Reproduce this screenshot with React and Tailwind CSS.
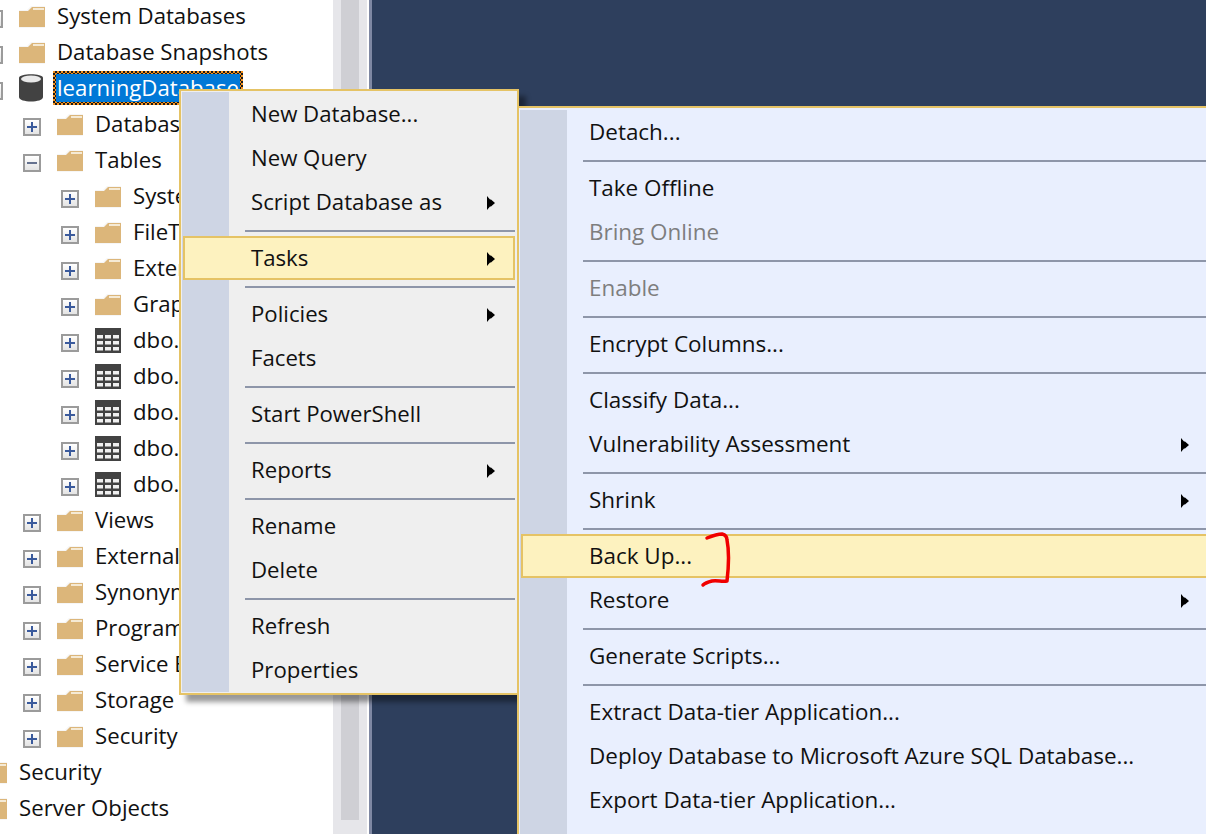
const FONT = "font-['Open_Sans',sans-serif]";

const treeRows = [
  { level: 0, icon: 'folder', label: 'System Databases', toggle: 'cut' },
  { level: 0, icon: 'folder', label: 'Database Snapshots', toggle: 'cut' },
  { level: 0, icon: 'db', label: 'learningDatabase', toggle: 'cut', selected: true },
  { level: 1, icon: 'folder', label: 'Database Diagrams', toggle: 'plus' },
  { level: 1, icon: 'folder', label: 'Tables', toggle: 'minus' },
  { level: 2, icon: 'folder', label: 'System Tables', toggle: 'plus' },
  { level: 2, icon: 'folder', label: 'FileTables', toggle: 'plus' },
  { level: 2, icon: 'folder', label: 'External Tables', toggle: 'plus' },
  { level: 2, icon: 'folder', label: 'Graph Tables', toggle: 'plus' },
  { level: 2, icon: 'table', label: 'dbo.Courses', toggle: 'plus' },
  { level: 2, icon: 'table', label: 'dbo.Lessons', toggle: 'plus' },
  { level: 2, icon: 'table', label: 'dbo.Marks', toggle: 'plus' },
  { level: 2, icon: 'table', label: 'dbo.Students', toggle: 'plus' },
  { level: 2, icon: 'table', label: 'dbo.Teachers', toggle: 'plus' },
  { level: 1, icon: 'folder', label: 'Views', toggle: 'plus' },
  { level: 1, icon: 'folder', label: 'External Resources', toggle: 'plus' },
  { level: 1, icon: 'folder', label: 'Synonyms', toggle: 'plus' },
  { level: 1, icon: 'folder', label: 'Programmability', toggle: 'plus' },
  { level: 1, icon: 'folder', label: 'Service Broker', toggle: 'plus' },
  { level: 1, icon: 'folder', label: 'Storage', toggle: 'plus' },
  { level: 1, icon: 'folder', label: 'Security', toggle: 'plus' },
  { level: -1, icon: 'folder', label: 'Security', toggle: 'plus' },
  { level: -1, icon: 'folder', label: 'Server Objects', toggle: 'plus' },
];

const indent = {
  '-1': '-ml-[53px]',
  0: '-ml-[15px]',
  1: 'ml-[23px]',
  2: 'ml-[61px]',
};

const contextMenu = [
  { label: 'New Database...' },
  { label: 'New Query' },
  { label: 'Script Database as', arrow: true },
  { sep: true },
  { label: 'Tasks', arrow: true, active: true },
  { sep: true },
  { label: 'Policies', arrow: true },
  { label: 'Facets' },
  { sep: true },
  { label: 'Start PowerShell' },
  { sep: true },
  { label: 'Reports', arrow: true },
  { sep: true },
  { label: 'Rename' },
  { label: 'Delete' },
  { sep: true },
  { label: 'Refresh' },
  { label: 'Properties' },
];

const tasksMenu = [
  { label: 'Detach...' },
  { sep: true },
  { label: 'Take Offline' },
  { label: 'Bring Online', disabled: true },
  { sep: true },
  { label: 'Enable', disabled: true },
  { sep: true },
  { label: 'Encrypt Columns...' },
  { sep: true },
  { label: 'Classify Data...' },
  { label: 'Vulnerability Assessment', arrow: true },
  { sep: true },
  { label: 'Shrink', arrow: true },
  { sep: true },
  { label: 'Back Up...', active: true },
  { label: 'Restore', arrow: true },
  { sep: true },
  { label: 'Generate Scripts...' },
  { sep: true },
  { label: 'Extract Data-tier Application...' },
  { label: 'Deploy Database to Microsoft Azure SQL Database...' },
  { label: 'Export Data-tier Application...' },
];

const FolderIcon = () => (
  <svg width="26" height="24" viewBox="0 0 26 24" className="shrink-0">
    <path d="M0 6H8L12 2H26V24H0Z" fill="#f6f6f6" />
    <path d="M0 7H9L13 3H26V23H0Z" fill="#dcb67a" />
    <rect x="14" y="4" width="11" height="2" fill="#f5ead5" />
  </svg>
);

const DbIcon = () => (
  <svg width="26" height="30" viewBox="0 0 26 30" className="shrink-0">
    <path d="M0 5C0 0 24 0 24 5V24C24 30 0 30 0 24Z" fill="#424242" />
    <ellipse cx="12" cy="6" rx="10" ry="3.5" fill="#e9e9e9" />
  </svg>
);

const TableIcon = () => (
  <svg width="26" height="25" viewBox="0 0 26 25" className="shrink-0">
    <rect width="26" height="25" fill="#424242" />
    {[7, 13, 19].map((y) =>
      [2, 10, 18].map((x) => (
        <rect key={`${x}-${y}`} x={x} y={y} width="6" height="3.5" fill="#f0f0f0" />
      ))
    )}
  </svg>
);

const Toggle = ({ open }) => (
  <span className="flex h-[18px] w-[18px] shrink-0 translate-y-[3px] items-center justify-center border-2 border-[#9b9b9b] bg-gradient-to-b from-white to-[#e4e4e4]">
    <svg width="12" height="12" viewBox="0 0 12 12">
      <rect x="1" y="5" width="10" height="2" fill={open ? '#65728f' : '#3a5a9c'} />
      {!open && <rect x="5" y="1" width="2" height="10" fill="#3a5a9c" />}
    </svg>
  </span>
);

const TreeRow = ({ row }) => (
  <div className={`flex h-9 items-center whitespace-nowrap ${indent[row.level]}`}>
    <Toggle open={row.toggle === 'minus'} />
    <span className="ml-4 flex w-[26px] shrink-0 items-center justify-center">
      {row.icon === 'folder' && <FolderIcon />}
      {row.icon === 'db' && <DbIcon />}
      {row.icon === 'table' && <TableIcon />}
    </span>
    {row.selected ? (
      <span className="ml-2 flex h-[34px] w-[190px] bg-[repeating-conic-gradient(#1a1a1a_0%_25%,#f7931e_0%_50%)] bg-[length:4px_4px] p-[3px]">
        <span className="flex flex-1 items-center overflow-hidden bg-[#0078d7] pl-px text-white">{row.label}</span>
      </span>
    ) : (
      <span className="ml-3 text-[#111]">{row.label}</span>
    )}
  </div>
);

const MenuList = ({ items }) => (
  <>
    {items.map((item, i) =>
      item.sep ? (
        <div key={i} className="h-3 pl-[63px] pr-px pt-1.5">
          <div className="h-0.5 w-full bg-[#8e96a9]" />
        </div>
      ) : (
        <div
          key={i}
          className={`mx-px flex h-11 items-center whitespace-nowrap border-2 pl-[66px] pr-[18px] ${
            item.active ? 'border-[#e5c365] bg-[#fdf2bf]' : 'border-transparent'
          } ${item.disabled ? 'text-[#7e7e7e]' : 'text-[#111]'}`}
        >
          <span>{item.label}</span>
          {item.arrow && (
            <svg width="8" height="14" viewBox="0 0 8 14" className="ml-auto translate-y-px">
              <path d="M0 0L3 3.5H4L8 7L4 10.5H3L0 14Z" fill="#000" />
            </svg>
          )}
        </div>
      )
    )}
  </>
);

export default function App() {
  return (
    <div className={`relative flex h-[834px] w-[1206px] overflow-hidden bg-white text-[22.2px] ${FONT}`}>
      {/* Object explorer */}
      <div className="-mt-0.5 w-[333px] shrink-0">
        {treeRows.map((row, i) => (
          <TreeRow key={i} row={row} />
        ))}
      </div>

      {/* Scrollbar */}
      <div className="w-[34px] shrink-0 bg-[#e6e6ea] px-2">
        <div className="h-[820px] w-[18px] bg-[#cfcfd4]" />
      </div>
      <div className="w-0.5 shrink-0 bg-white" />
      <div className="w-[3px] shrink-0 bg-[#7f88a3]" />
      <div className="flex-1 bg-[#2e3f5d]" />

      {/* Context menu */}
      <div className="absolute left-[179px] top-[89px] h-[606px] w-[340px] border-2 border-[#e5c365] bg-[#efefef] p-px shadow-[7px_7px_5px_rgba(0,0,0,0.4)]">
        <div className="h-full bg-[linear-gradient(to_right,#ced5e4_47px,#efefef_47px)]">
          <MenuList items={contextMenu} />
        </div>
      </div>

      {/* Tasks submenu */}
      <div className="absolute left-[517px] top-[106px] h-[800px] w-[696px] border-2 border-[#e5c365] bg-[#e9effe] px-px pt-0.5 text-[22.45px]">
        <div className="h-full bg-[linear-gradient(to_right,#ced5e4_47px,#e9effe_47px)]">
          <MenuList items={tasksMenu} />
        </div>
      </div>

      {/* Red pen mark around Back Up */}
      <svg className="absolute left-[695px] top-[528px]" width="42" height="62" viewBox="0 0 42 62">
        <path
          d="M12 10C17 8 23 6 27 6C31 7 32 9 32 12C34 22 34 36 32 53C27 54 22 52 17 53C13 54 10 55 8 57"
          fill="none"
          stroke="#f00000"
          strokeWidth="3.5"
          strokeLinecap="round"
          strokeLinejoin="round"
        />
      </svg>
    </div>
  );
}
